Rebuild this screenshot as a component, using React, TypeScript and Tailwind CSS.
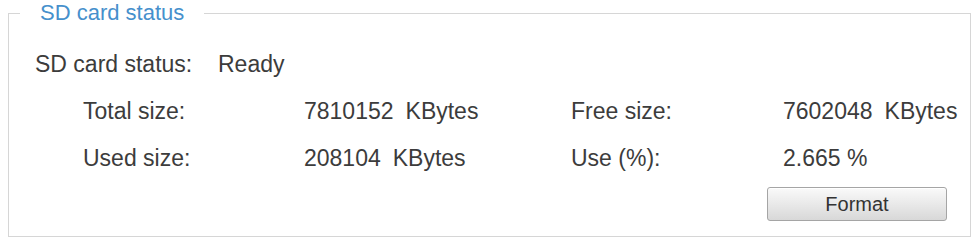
import React from 'react';

const font = { fontFamily: '"Liberation Sans", Arial, sans-serif' };

const Value = ({ num, unit }: { num: string; unit: string }) => (
  <span>
    {num}
    <span className="ml-[12px]">{unit}</span>
  </span>
);

export default function App() {
  return (
    <div className="w-[978px] h-[240px] bg-white pt-[1px] text-[23px] text-[#3c3c3c]" style={font}>
      <fieldset className="min-w-0 ml-2 mr-[7px] border border-[#d6d6d6] pl-[26px] pr-[23px] pb-[15px]">
        <legend className="-ml-[15px] px-5 leading-[24px] text-[22px] text-[#4690cc]">SD card status</legend>

        <div className="flex items-center h-[47px] mt-[16px]">
          <span className="w-[183px]">SD card status:</span>
          <span>Ready</span>
        </div>

        <div className="grid grid-cols-[221px_267px_212px_1fr] ml-[48px]">
          <div className="h-[47px] flex items-center">Total size:</div>
          <div className="h-[47px] flex items-center"><Value num="7810152" unit="KBytes" /></div>
          <div className="h-[47px] flex items-center">Free size:</div>
          <div className="h-[47px] flex items-center whitespace-nowrap"><Value num="7602048" unit="KBytes" /></div>

          <div className="h-[47px] flex items-center">Used size:</div>
          <div className="h-[47px] flex items-center"><Value num="208104" unit="KBytes" /></div>
          <div className="h-[47px] flex items-center">Use (%):</div>
          <div className="h-[47px] flex items-center">2.665 %</div>
        </div>

        <div className="flex justify-end mt-[5px]">
          <button className="w-[180px] h-[34px] rounded-[3px] border border-[#a5a5a5] bg-gradient-to-b from-[#fafafa] to-[#d8d8d8] text-[20px] text-[#333] shadow-[inset_0_1px_0_#fff]">
            Format
          </button>
        </div>
      </fieldset>
    </div>
  );
}
